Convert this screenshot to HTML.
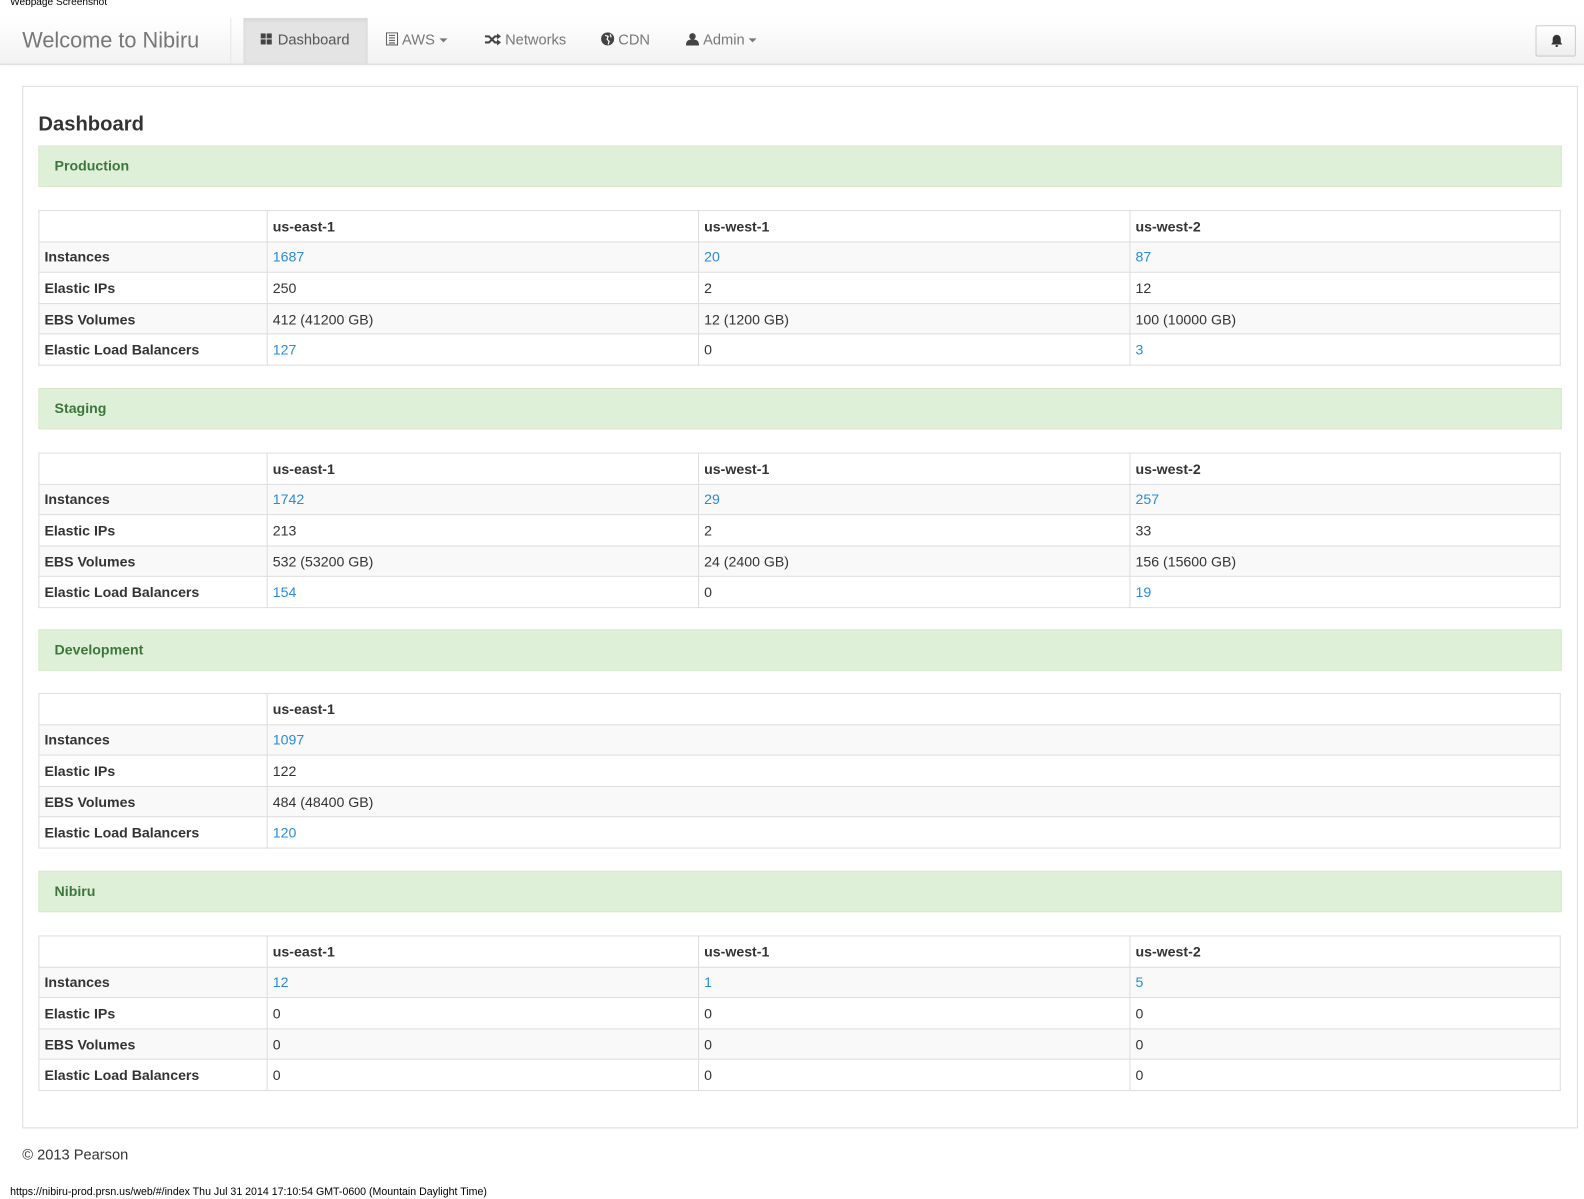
<!DOCTYPE html>
<html><head><meta charset="utf-8"><style>
*{box-sizing:border-box}
html,body{margin:0;padding:0;background:#fff;overflow:hidden}
body{width:1584px;height:1199px;font-family:"Liberation Sans",Arial,sans-serif;color:#333}
#w{position:absolute;left:0;top:0;width:1568px;height:1187px;transform:scale(1.0102);transform-origin:0 0}
.cap{position:absolute;left:10px;top:-3px;font-size:10px;color:#000}
.nav{position:absolute;left:0;top:18px;width:1568px;height:46px;background:linear-gradient(#fff,#f2f2f2);border-bottom:1px solid #d4d4d4;box-shadow:0 1px 3px rgba(0,0,0,.08)}
.brand{position:absolute;left:22px;top:10px;font-size:21.5px;color:#777}
.sep{position:absolute;left:228px;top:0;width:1px;height:45px;background:#e6e6e6}
.item{position:absolute;top:0;height:45px;line-height:45px;font-size:14.5px;color:#777}
.active{background:#e4e4e4;color:#555;box-shadow:inset 0 2px 4px rgba(0,0,0,.08)}
.caret{display:inline-block;border-top:4px solid #777;border-left:4px solid transparent;border-right:4px solid transparent;vertical-align:middle;margin-left:4px}
.bell{position:absolute;left:1520px;top:7px;width:40px;height:31px;border:1px solid #ccc;background:linear-gradient(#fff,#eee);border-radius:2px}
.panel{position:absolute;left:22px;top:85px;width:1540px;height:1032px;border:1px solid #ddd}
h3{position:absolute;left:38px;top:112px;margin:0;font-size:20px;font-weight:bold;color:#333}
.al{position:absolute;left:38px;width:1508px;height:41px;background:#dff0d8;border:1px solid #d6e9c6;color:#3c763d;font-weight:bold;font-size:14px;line-height:39px;padding-left:15px}
table{position:absolute;left:38px;width:1507px;border-collapse:collapse;font-size:14px}
td{border:1px solid #ddd;height:30.6px;padding:0 5px;line-height:20px}
tr:nth-child(even) td{background:#f9f9f9}
td.h{font-weight:bold;width:226px}
tr:first-child td{font-weight:bold}
a{color:#2a8bd8;text-decoration:none}
.foot{position:absolute;left:22px;top:1136px;font-size:14.5px;color:#333}
.url{position:absolute;left:10px;top:1174px;font-size:10.5px;color:#000}
</style></head><body><div id="w">
<div class="cap">Webpage Screenshot</div>
<div class="nav">
<div class="brand">Welcome to Nibiru</div>
<div class="sep"></div>
<div class="item active" style="left:241px;width:123px;padding-left:17px"><svg width="12" height="12" viewBox="0 0 12 12" style="vertical-align:-1px;margin-right:5px"><rect x="0" y="0" width="5" height="5" fill="#444"/><rect x="6" y="0" width="5" height="5" fill="#444"/><rect x="0" y="6" width="5" height="5" fill="#444"/><rect x="6" y="6" width="5" height="5" fill="#444"/></svg>Dashboard</div>
<div class="item" style="left:382px"><svg width="12" height="13" viewBox="0 0 12 13" style="vertical-align:-1px;margin-right:4px"><rect x="0.5" y="0.5" width="11" height="12" fill="none" stroke="#555"/><path d="M3 3h6M3 5.5h6M3 8h6M3 10.5h6" stroke="#555"/></svg>AWS<span class="caret"></span></div>
<div class="item" style="left:480px"><svg width="16" height="12" viewBox="0 0 16 12" style="vertical-align:-1px;margin-right:4px"><path d="M0 3h4l6 6h3M0 9h4l6-6h3" stroke="#444" stroke-width="2" fill="none"/><path d="M12 0l4 3-4 3zM12 6l4 3-4 3z" fill="#444"/></svg>Networks</div>
<div class="item" style="left:595px"><svg width="13" height="13" viewBox="0 0 13 13" style="vertical-align:-1px;margin-right:4px"><circle cx="6.5" cy="6.5" r="6.5" fill="#444"/><path d="M4 3l3 1-1 3 2 2-1 3M9 2l1 3" stroke="#fff" stroke-width="1.2" fill="none"/></svg>CDN</div>
<div class="item" style="left:679px"><svg width="13" height="13" viewBox="0 0 13 13" style="vertical-align:-1px;margin-right:4px"><circle cx="6.5" cy="4" r="3.2" fill="#444"/><path d="M0 13c0-5 3-6 6.5-6s6.5 1 6.5 6z" fill="#444"/></svg>Admin<span class="caret"></span></div>
<div class="bell"><svg width="12" height="13" viewBox="0 0 12 13" style="position:absolute;left:14px;top:8px"><path d="M6 0.5c-2.5 0-4 2-4 4.5v3L0.5 10h11L10 8V5c0-2.5-1.5-4.5-4-4.5z" fill="#333"/><rect x="5" y="10.5" width="2" height="2" fill="#333"/></svg></div>
</div>
<div class="panel"></div>
<h3>Dashboard</h3>

<div class="al" style="top:144px">Production</div>
<table style="top:208px">
<tr><td class="h"></td><td style="width:427px">us-east-1</td><td style="width:427px">us-west-1</td><td>us-west-2</td></tr>
<tr><td class="h">Instances</td><td><a>1687</a></td><td><a>20</a></td><td><a>87</a></td></tr>
<tr><td class="h">Elastic IPs</td><td>250</td><td>2</td><td>12</td></tr>
<tr><td class="h">EBS Volumes</td><td>412 (41200 GB)</td><td>12 (1200 GB)</td><td>100 (10000 GB)</td></tr>
<tr><td class="h">Elastic Load Balancers</td><td><a>127</a></td><td>0</td><td><a>3</a></td></tr>
</table>

<div class="al" style="top:384px">Staging</div>
<table style="top:448px">
<tr><td class="h"></td><td style="width:427px">us-east-1</td><td style="width:427px">us-west-1</td><td>us-west-2</td></tr>
<tr><td class="h">Instances</td><td><a>1742</a></td><td><a>29</a></td><td><a>257</a></td></tr>
<tr><td class="h">Elastic IPs</td><td>213</td><td>2</td><td>33</td></tr>
<tr><td class="h">EBS Volumes</td><td>532 (53200 GB)</td><td>24 (2400 GB)</td><td>156 (15600 GB)</td></tr>
<tr><td class="h">Elastic Load Balancers</td><td><a>154</a></td><td>0</td><td><a>19</a></td></tr>
</table>

<div class="al" style="top:623px">Development</div>
<table style="top:686px">
<tr><td class="h"></td><td>us-east-1</td></tr>
<tr><td class="h">Instances</td><td><a>1097</a></td></tr>
<tr><td class="h">Elastic IPs</td><td>122</td></tr>
<tr><td class="h">EBS Volumes</td><td>484 (48400 GB)</td></tr>
<tr><td class="h">Elastic Load Balancers</td><td><a>120</a></td></tr>
</table>

<div class="al" style="top:862px">Nibiru</div>
<table style="top:926px">
<tr><td class="h"></td><td style="width:427px">us-east-1</td><td style="width:427px">us-west-1</td><td>us-west-2</td></tr>
<tr><td class="h">Instances</td><td><a>12</a></td><td><a>1</a></td><td><a>5</a></td></tr>
<tr><td class="h">Elastic IPs</td><td>0</td><td>0</td><td>0</td></tr>
<tr><td class="h">EBS Volumes</td><td>0</td><td>0</td><td>0</td></tr>
<tr><td class="h">Elastic Load Balancers</td><td>0</td><td>0</td><td>0</td></tr>
</table>

<div class="foot">© 2013 Pearson</div>
<div class="url">https://nibiru-prod.prsn.us/web/#/index Thu Jul 31 2014 17:10:54 GMT-0600 (Mountain Daylight Time)</div>
</div></body></html>
